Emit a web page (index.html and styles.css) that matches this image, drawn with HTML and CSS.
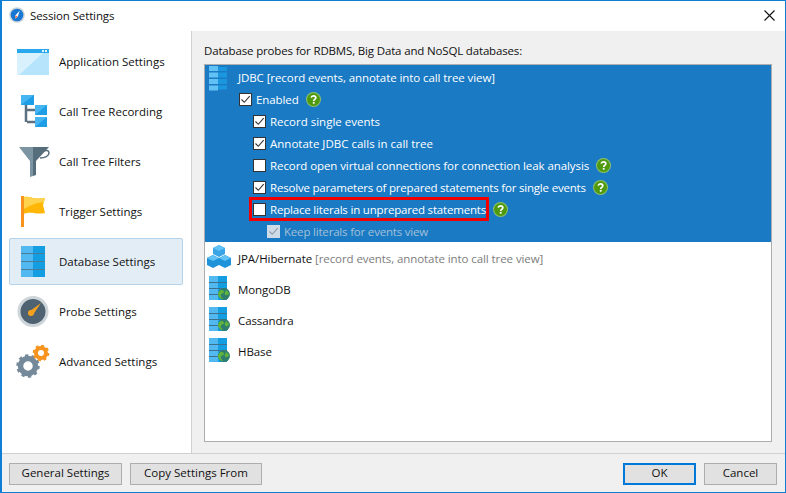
FILE: index.html
```html
<!DOCTYPE html>
<html lang="en">
<head>
<meta charset="utf-8">
<title>Session Settings</title>
<link rel="stylesheet" href="styles.css">
</head>
<body>
<svg class="defs" width="0" height="0" aria-hidden="true">
  <defs>
    <symbol id="help" viewBox="0 0 15 15">
      <circle cx="7.5" cy="7.5" r="7.5" fill="#8fc06a"/>
      <circle cx="7.5" cy="7.5" r="6.5" fill="#4f9a0f"/>
      <path d="M5.2 5.6C5.4 4.4 6.3 3.8 7.5 3.8c1.4 0 2.3.8 2.3 1.9 0 1.8-2.1 1.6-2.1 3.3" fill="none" stroke="#fff" stroke-width="1.7"/>
      <rect x="6.8" y="9.9" width="1.8" height="1.8" fill="#fff"/>
    </symbol>
    <symbol id="dbglobe" viewBox="0 0 24 26">
      <path d="M0 1h9v6H0zM0 8h9v5H0zM0 14h9v5H0zM0 20h9v5H0z" fill="#52b8f0"/>
      <path d="M9 1h9v6H9zM9 8h9v5H9zM9 14h9v5H9zM9 20h9v5H9z" fill="#129ee0"/>
      <path d="M0 7.500h18M0 13.500h18M0 19.500h18" stroke="#3d6f8f"/>
      <circle cx="15" cy="19" r="6" fill="#2f7d6c"/>
      <path d="M11 15.500c2-1 4 0 4 1.500s-2 1-3 2.500 1 3 2 4.500c-3 0-5-2.500-5-5 0-1.500 1-3 2-3.500zM17 15c2 1 3 3 3 4l-3 1.500-1.500-2z" fill="#5fb53c"/>
    </symbol>
    <symbol id="check" viewBox="0 0 11 11">
      <path d="M1.500 5.500 4.300 8.300 9.700 2.200" fill="none" stroke="currentColor" stroke-width="1.100"/>
    </symbol>
  </defs>
</svg>
<div class="window">
  <header class="titlebar">
    <svg class="app-icon" viewBox="0 0 16 16" width="16" height="16"><circle cx="8" cy="8" r="7.800" fill="#c9d3da"/><circle cx="8" cy="8" r="6.300" fill="#1877d2"/><path d="M10.800 3.600 8.800 9.500 6.300 11.700 6.600 8.300z" fill="#fff"/><path d="M6.400 8.500 8.700 9.300 6.300 11.700z" fill="#f26a3d"/></svg>
    <span class="title">Session Settings</span>
    <svg class="close" viewBox="0 0 11 11" width="11" height="11"><path d="M.5.500l10 10M10.500.500l-10 10" stroke="#111" stroke-width="1.100" fill="none"/></svg>
  </header>
  <div class="main">
    <nav class="sidebar">
      <div class="nav-item">
        <svg class="nav-icon" viewBox="0 0 36 37"><rect x="2" y="6" width="32" height="26" fill="#b5e4fc"/><path d="M2 32V10h26L4 32z" fill="#d9f1fd"/><rect x="2" y="6" width="32" height="4" fill="#2aa8ee"/><rect x="27" y="7" width="2" height="2" fill="#e3f5fe"/><rect x="30" y="7" width="2" height="2" fill="#e3f5fe"/></svg>
        <span>Application Settings</span>
      </div>
      <div class="nav-item">
        <svg class="nav-icon" viewBox="0 0 36 37"><path d="M11 12v17M12 17h9M12 29h9" stroke="#5b7080" stroke-width="2.500" fill="none"/><rect x="6" y="2" width="13" height="10" fill="#1d9ee6"/><path d="M6 12V2h13z" fill="#45b6f2"/><rect x="20" y="12" width="12" height="10" fill="#1d9ee6"/><path d="M20 22V12h12z" fill="#45b6f2"/><rect x="20" y="24" width="12" height="10" fill="#1d9ee6"/><path d="M20 34V24h12z" fill="#45b6f2"/></svg>
        <span>Call Tree Recording</span>
      </div>
      <div class="nav-item">
        <svg class="nav-icon" viewBox="0 0 36 37"><path d="M4 4h14v29l-3 1v-16z" fill="#7d95a3"/><path d="M18 4h16l-13 14v14l-3 1z" fill="#566d7b"/><path d="M28 8c3-1 6-1 6 2s-4 5-9 5" fill="none" stroke="#566d7b" stroke-width="1.500"/></svg>
        <span>Call Tree Filters</span>
      </div>
      <div class="nav-item">
        <svg class="nav-icon" viewBox="0 0 36 37"><rect x="6" y="3" width="3" height="31" fill="#f7941d"/><path d="M9 4c6-1 9 3 21 1l-2 7 2 8c-8 2-14-2-21 1z" fill="#ffb606"/><path d="M9 4c6-1 9 3 21 1l-1 4C20 10 14 13 9 16z" fill="#ffd34e"/></svg>
        <span>Trigger Settings</span>
      </div>
      <div class="nav-item selected">
        <svg class="nav-icon" viewBox="0 0 36 37"><path d="M6 3h12v7H6zM6 11h12v7H6zM6 19h12v7H6zM6 27h12v7H6z" fill="#52b8f0"/><path d="M18 3h12v7H18zM18 11h12v7H18zM18 19h12v7H18zM18 27h12v7H18z" fill="#129ee0"/><path d="M6 10.500h24M6 18.500h24M6 26.500h24" stroke="#4b7c9c"/></svg>
        <span>Database Settings</span>
      </div>
      <div class="nav-item">
        <svg class="nav-icon" viewBox="0 0 36 37"><circle cx="18" cy="18.500" r="15.500" fill="#cdd5d9"/><circle cx="18" cy="18.500" r="12.500" fill="#4f6272"/><path d="M26 10 18.500 21 15 18z" fill="#f7a11e"/><circle cx="16" cy="20" r="3" fill="#f7a11e"/></svg>
        <span>Probe Settings</span>
      </div>
      <div class="nav-item">
        <svg class="nav-icon" viewBox="0 0 36 37"><circle cx="13" cy="23" r="7.500" fill="none" stroke="#74899a" stroke-width="5.500"/><circle cx="13" cy="23" r="10.500" fill="none" stroke="#74899a" stroke-width="2.500" stroke-dasharray="3.300 3.300"/><circle cx="26" cy="10" r="5" fill="none" stroke="#f7931e" stroke-width="4"/><circle cx="26" cy="10" r="7.300" fill="none" stroke="#f7931e" stroke-width="2" stroke-dasharray="3 2.730"/></svg>
        <span>Advanced Settings</span>
      </div>
    </nav>
    <section class="content">
      <p class="caption">Database probes for RDBMS, Big Data and NoSQL databases:</p>
      <div class="list">
        <div class="group">
          <div class="row head">
            <svg class="probe-icon" viewBox="0 0 24 26"><path d="M0 1h9v5H0zM0 7.500h9v5H0zM0 14h9v5H0zM0 20.500h9v5H0z" fill="#61c1f5"/><path d="M9 2h9v4H9zM9 7.500h9v5H9zM9 14h9v5H9zM9 20.500h9v4H9z" fill="#1a97de"/></svg>
            <span>JDBC [record events, annotate into call tree view]</span>
          </div>
          <div class="row lvl1"><span class="box"><svg><use href="#check"/></svg></span><span>Enabled</span><svg class="help"><use href="#help"/></svg></div>
          <div class="row lvl2 natural"><span class="box"><svg><use href="#check"/></svg></span><span>Record single events</span></div>
          <div class="row lvl2 natural"><span class="box"><svg><use href="#check"/></svg></span><span>Annotate JDBC calls in call tree</span></div>
          <div class="row lvl2"><span class="box"></span><span>Record open virtual connections for connection leak analysis</span><svg class="help"><use href="#help"/></svg></div>
          <div class="row lvl2 tight"><span class="box"><svg><use href="#check"/></svg></span><span>Resolve parameters of prepared statements for single events</span><svg class="help"><use href="#help"/></svg></div>
          <div class="row lvl2 tight marked"><i class="red-frame"></i><span class="box"></span><span>Replace literals in unprepared statements</span><svg class="help"><use href="#help"/></svg></div>
          <div class="row lvl3 tight disabled"><span class="box"><svg><use href="#check"/></svg></span><span>Keep literals for events view</span></div>
        </div>
        <div class="row probe">
          <svg class="probe-icon wide" viewBox="0 0 26 25"><path d="M13 1l6 3v6l-6 3-6-3V4z" fill="#3aa5e6"/><path d="M7 11l6 3v7l-6 3-6-3v-7z" fill="#1f93da"/><path d="M19 11l6 3v7l-6 3-6-3v-7z" fill="#1f93da"/><path d="M13 1l6 3-6 3-6-3zM7 11l6 3-6 3-6-3zM19 11l6 3-6 3-6-3z" fill="#63c2f5"/></svg>
          <span>JPA/Hibernate <em>[record events, annotate into call tree view]</em></span>
        </div>
        <div class="row probe"><svg class="probe-icon"><use href="#dbglobe"/></svg><span>MongoDB</span></div>
        <div class="row probe"><svg class="probe-icon"><use href="#dbglobe"/></svg><span>Cassandra</span></div>
        <div class="row probe"><svg class="probe-icon"><use href="#dbglobe"/></svg><span>HBase</span></div>
      </div>
    </section>
  </div>
  <footer class="footer">
    <button class="btn general">General Settings</button>
    <button class="btn copy">Copy Settings From</button>
    <button class="btn ok">OK</button>
    <button class="btn cancel">Cancel</button>
  </footer>
</div>
</body>
</html>
```

FILE: styles.css
```css
* { box-sizing: border-box; }
html, body { margin: 0; padding: 0; }
body {
  width: 786px;
  height: 493px;
  overflow: hidden;
  font-family: "Open Sans", "Noto Sans", sans-serif;
  font-size: 11.5px;
  color: #111;
  background: #fff;
}
.defs { display: block; height: 0; }
.window {
  width: 786px;
  height: 493px;
  display: flex;
  flex-direction: column;
  border: 1px solid #0f7fd6;
  border-left-width: 2px;
  background: #f0f0f0;
}
.titlebar {
  height: 30px;
  flex: none;
  display: flex;
  align-items: center;
  padding: 0 10px 2px 7px;
  background: #fff;
}
.app-icon { flex: none; }
.title { margin-left: 5px; letter-spacing: -0.12px; }
.close { margin-left: auto; flex: none; }
.main { flex: 1; display: flex; min-height: 0; }
.sidebar {
  width: 190px;
  flex: none;
  display: flex;
  flex-direction: column;
  gap: 3px;
  padding: 7px 8px 0 7px;
  background: #fff;
  border-right: 1px solid #d0d0d0;
}
.nav-item {
  height: 47px;
  display: flex;
  align-items: center;
  gap: 8px;
  padding-left: 6px;
  border: 1px solid transparent;
  border-radius: 2px;
}
.nav-item.selected { background: #e3edf6; border-color: #b4d2ea; }
.nav-icon { width: 36px; height: 37px; flex: none; margin-left: -1px; }
.content { flex: 1; min-width: 0; padding: 10px 13px 11px 12px; display: flex; flex-direction: column; }
.caption { margin: 0 0 3px; line-height: 20px; height: 20px; letter-spacing: -0.16px; }
.list { flex: 1; background: #fff; border: 1px solid #adadad; letter-spacing: -0.08px; }
.group { background: #1a7ac4; color: #fff; }
.row { position: relative; display: flex; align-items: center; white-space: nowrap; }
.head { height: 23px; padding: 2px 0 0 4px; gap: 5px; }
.lvl1, .lvl2, .lvl3 { height: 22px; gap: 4px; }
.lvl1 { padding-left: 34px; }
.lvl2 { padding-left: 48px; }
.lvl3 { padding-left: 62px; }
.natural { letter-spacing: 0; }
.tight { letter-spacing: -0.19px; }
.probe { height: 31px; padding: 2px 0 0 4px; gap: 5px; }
.probe em { font-style: normal; color: #7d7d7d; }
.probe-icon { width: 24px; height: 26px; flex: none; }
.probe .probe-icon { margin-bottom: 4px; }
.probe .probe-icon.wide { width: 26px; height: 25px; margin-left: -3px; margin-right: 1px; }
.box {
  width: 13px;
  height: 13px;
  flex: none;
  display: flex;
  align-items: center;
  justify-content: center;
  background: #fff;
  border: 1px solid #333;
  color: #333;
}
.box svg { width: 11px; height: 11px; }
.help { width: 15px; height: 15px; flex: none; margin-left: 3px; }
.disabled { color: #a3c0d8; }
.disabled .box { background: #cfdbe6; border-color: #cfdbe6; color: #8a9aa8; }
.red-frame {
  position: absolute;
  left: 44px;
  top: -1px;
  width: 240px;
  height: 24px;
  border: 3px solid #f00000;
}
.marked .box, .marked span { position: relative; }
.footer {
  height: 39px;
  flex: none;
  display: flex;
  align-items: center;
  padding: 1px 8px 0 7px;
  border-top: 1px solid #d0d0d0;
  gap: 8px;
}
.btn {
  height: 22px;
  padding: 0 0 2px;
  font: inherit;
  color: #111;
  background: #e1e1e1;
  border: 1px solid #adadad;
}
.general { width: 113px; }
.copy { width: 132px; }
.ok { width: 73px; margin-left: auto; border: 2px solid #0078d7; }
.cancel { width: 73px; }
```
